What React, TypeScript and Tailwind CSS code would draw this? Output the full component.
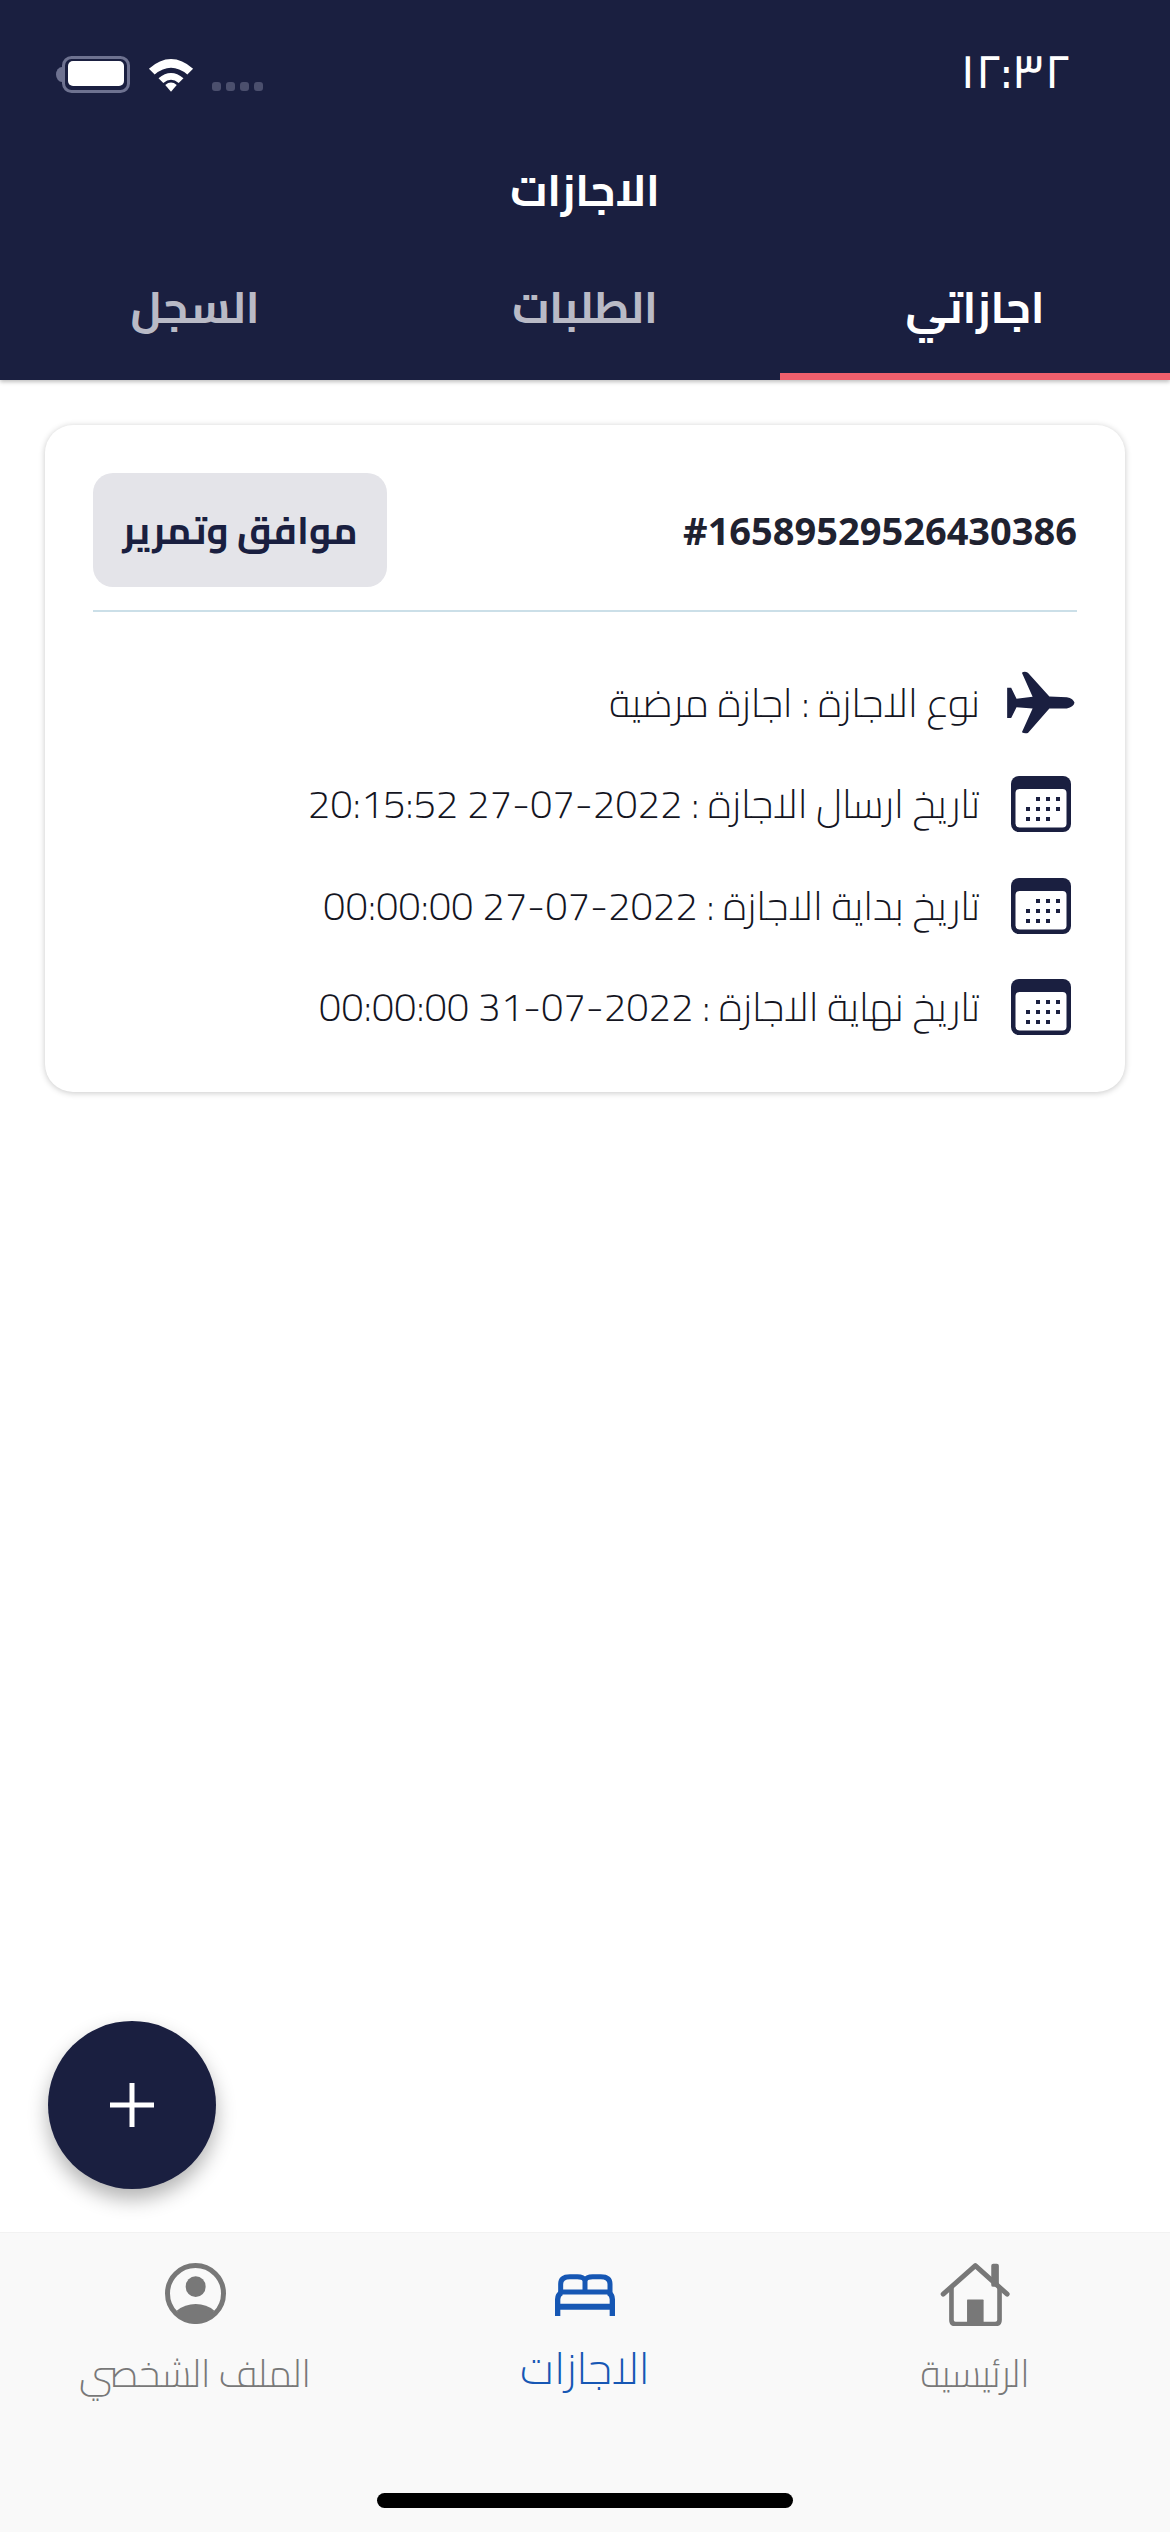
import React from "react";

const AR = "font-['Cairo','Tajawal','Noto_Sans_Arabic','Noto_Sans','DejaVu_Sans',sans-serif]";

function Plane() {
  return (
    <svg width="70" height="63" viewBox="82 60 206 188" fill="#1a1f40">
      <path d="M285 155 Q282 142 262 138 L210 136 L146 65 Q136 60 128 65 L160 137 L112 143 L96 110 L84 110 L84 200 L96 200 L112 168 L160 172 L128 243 Q136 248 146 245 L210 172 L262 172 Q282 168 285 155 Z" />
    </svg>
  );
}

function Calendar() {
  const dots = [
    [25, 21], [35, 21], [45, 21],
    [15, 31], [25, 31], [35, 31], [45, 31],
    [15, 41], [25, 41], [35, 41],
  ];
  return (
    <svg width="60" height="56" viewBox="0 0 60 56" fill="none">
      <rect x="0" y="0" width="60" height="56" rx="8" fill="#1a1f40" />
      <rect x="4.5" y="13" width="51" height="38.5" rx="4" fill="#fff" />
      {dots.map(([x, y]) => (
        <rect key={`${x}-${y}`} x={x} y={y} width="4" height="4" fill="#1a1f40" />
      ))}
    </svg>
  );
}

function Row({ icon, text }: { icon: React.ReactNode; text: string }) {
  return (
    <div className="flex items-center h-[101.5px] gap-[25px]">
      <div className="w-[72px] flex justify-center shrink-0">{icon}</div>
      <span className="text-[40px] font-light leading-none text-[#14151f] whitespace-nowrap">{text}</span>
    </div>
  );
}

function Tab({ label, active }: { label: string; active?: boolean }) {
  return (
    <div className={`flex items-center justify-center border-b-[7px] h-full ${active ? "border-[#ef5f6c] text-white" : "border-transparent text-[#b9bac6]"}`}>
      <span className="text-[44px] font-bold leading-none">{label}</span>
    </div>
  );
}

export default function App() {
  return (
    <div dir="rtl" className={`w-[1170px] h-[2532px] bg-white flex flex-col relative overflow-hidden ${AR}`}>
      <header className="h-[380px] shrink-0 bg-[#1a1f40] flex flex-col shadow-[0_2px_4px_rgba(0,0,0,0.25)] z-10">
        <div dir="ltr" className="h-[140px] flex items-start justify-between pl-[55px] pr-[100px] pt-[46px]">
          <div className="flex items-start gap-[17px]">
            <svg width="75" height="37" viewBox="0 0 75 37" className="mt-[10px]">
              <path d="M7 11 a6 7.5 0 0 0 0 15z" fill="#6e7290" />
              <rect x="8.5" y="1.5" width="65" height="34" rx="8" fill="none" stroke="#6e7290" strokeWidth="3" />
              <rect x="13" y="5" width="56" height="25" rx="5" fill="#fff" />
            </svg>
            <svg width="48" height="37" viewBox="0 0 50 38" className="mt-[9px]">
              <path d="M2 14 Q25 -6 48 14 L42 20 Q25 6 8 20 Z" fill="#fff" />
              <path d="M12 24 Q25 13 38 24 L33 29 Q25 22 17 29 Z" fill="#fff" />
              <path d="M19 31 Q25 26 31 31 L25 38 Z" fill="#fff" />
            </svg>
            <div className="flex gap-[5px] mt-[36px]">
              {[0, 1, 2, 3].map((i) => (
                <span key={i} className="w-[9px] h-[9px] rounded-[3px] bg-[#4b4f6d]" />
              ))}
            </div>
          </div>
          <span className="text-white text-[48px] leading-none font-medium">١٢:٣٢</span>
        </div>
        <div className="h-[100px] flex items-center justify-center">
          <span className="text-white text-[44px] font-bold leading-none">الاجازات</span>
        </div>
        <div className="flex-1 grid grid-cols-3">
          <Tab label="اجازاتي" active />
          <Tab label="الطلبات" />
          <Tab label="السجل" />
        </div>
      </header>

      <main className="flex-1 pt-[45px] px-[45px]">
        <section className="h-[667px] bg-white rounded-[28px] shadow-[0_1px_6px_rgba(0,0,0,0.22)] px-[48px] pt-[48px]">
          <div className="h-[139px] flex items-start justify-between border-b-2 border-[#cbdfe8]">
            <span dir="ltr" className="text-[38px] font-bold text-[#1f2230] leading-[114px] font-['Open_Sans',sans-serif]">#16589529526430386</span>
            <div className="w-[294px] h-[114px] rounded-[20px] bg-[#e4e4e9] flex items-center justify-center">
              <span className="text-[38px] font-bold text-[#1a1f40] leading-none">موافق وتمرير</span>
            </div>
          </div>
          <div className="pt-[40px]">
            <Row icon={<Plane />} text="نوع الاجازة : اجازة مرضية" />
            <Row icon={<Calendar />} text="تاريخ ارسال الاجازة : 2022-07-27 20:15:52" />
            <Row icon={<Calendar />} text="تاريخ بداية الاجازة : 2022-07-27 00:00:00" />
            <Row icon={<Calendar />} text="تاريخ نهاية الاجازة : 2022-07-31 00:00:00" />
          </div>
        </section>
      </main>

      <button className="absolute left-[48px] top-[2021px] w-[168px] h-[168px] rounded-full bg-[#1a1f40] shadow-[0_10px_20px_rgba(0,0,0,0.3)] flex items-center justify-center">
        <svg width="44" height="44" viewBox="0 0 44 44">
          <rect x="19.5" y="0" width="5" height="44" fill="#fff" />
          <rect x="0" y="19.5" width="44" height="5" fill="#fff" />
        </svg>
      </button>

      <nav className="h-[300px] shrink-0 bg-[#f9f9f9] border-t border-[#f2f2f2] flex flex-col">
        <div className="grid grid-cols-3 pt-[30px]">
          <div className="flex flex-col items-center gap-[23px]">
            <svg width="70" height="63" viewBox="92 68 208 190" fill="none">
              <rect x="245" y="70" width="23" height="70" rx="6" fill="#787878" />
              <path d="M100 162 L197 76 L293 162" stroke="#787878" strokeWidth="15" strokeLinecap="round" strokeLinejoin="round" />
              <path d="M125 140 V240 Q125 252 137 252 H257 Q270 252 270 240 V140" stroke="#787878" strokeWidth="14" />
              <rect x="172" y="178" width="50" height="74" rx="2" fill="#787878" />
            </svg>
            <span className="text-[38px] font-light leading-[48px] text-[#787878]">الرئيسية</span>
          </div>
          <div className="flex flex-col items-center gap-[26px] pt-[11px]">
            <svg width="60" height="42" viewBox="105 102 180 126" fill="none">
              <path d="M122 160 V132 Q122 110 150 110 H172 Q190 110 195 120 Q200 110 218 110 H242 Q270 110 270 132 V160" stroke="#1657b4" strokeWidth="15" />
              <path d="M195 116 V156 M122 156 H270" stroke="#1657b4" strokeWidth="15" />
              <path d="M113 228 V178 Q113 164 125 158 M277 228 V178 Q277 164 265 158" stroke="#1657b4" strokeWidth="16" />
              <path d="M105 200 H285" stroke="#1657b4" strokeWidth="18" />
            </svg>
            <span className="text-[44px] font-light leading-[52px] text-[#1657b4]">الاجازات</span>
          </div>
          <div className="flex flex-col items-center gap-[25px]">
            <svg width="61" height="61" viewBox="105 72 183 183" fill="none">
              <circle cx="196.5" cy="163.5" r="84" stroke="#787878" strokeWidth="15" />
              <ellipse cx="197" cy="143" rx="30" ry="31" fill="#787878" />
              <path d="M140 215 Q165 195 197 195 Q230 195 253 215 Q235 250 197 255 Q160 250 140 215 Z" fill="#787878" />
            </svg>
            <span className="text-[38px] font-light leading-[48px] text-[#787878]">الملف الشخصي</span>
          </div>
        </div>
        <div className="flex-1 flex items-end justify-center pb-[24px]">
          <div className="w-[416px] h-[15px] rounded-full bg-black" />
        </div>
      </nav>
    </div>
  );
}
